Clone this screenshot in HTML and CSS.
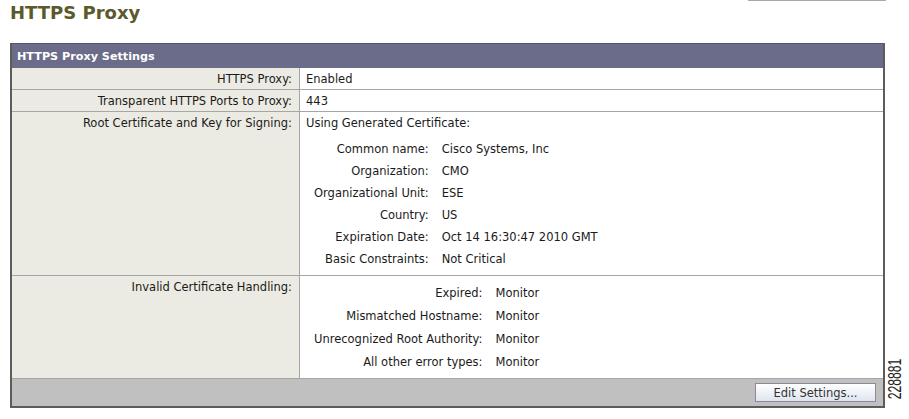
FILE: index.html
```html
<!DOCTYPE html>
<html lang="en">
<head>
    <meta charset="UTF-8">
    <meta name="viewport" content="width=device-width, initial-scale=1.0">
    <link rel="stylesheet" href="styles.css">
    <title>HTTPS Proxy</title>
</head>
<body>
    <!-- Page heading -->
    <div class="topbar">
        <h1>HTTPS Proxy</h1>
        <div class="tab-edge"></div>
    </div>

    <div class="page">
        <div class="panel">
            <div class="panel-head">HTTPS Proxy Settings</div>

            <div class="row">
                <div class="label">HTTPS Proxy:</div>
                <div class="value">Enabled</div>
            </div>

            <div class="row">
                <div class="label">Transparent HTTPS Ports to Proxy:</div>
                <div class="value">443</div>
            </div>

            <!-- Certificate details -->
            <div class="row">
                <div class="label">Root Certificate and Key for Signing:</div>
                <div class="value cert">
                    <div>Using Generated Certificate:</div>
                    <div class="details">
                        <span class="k">Common name:</span><span>Cisco Systems, Inc</span>
                        <span class="k">Organization:</span><span>CMO</span>
                        <span class="k">Organizational Unit:</span><span>ESE</span>
                        <span class="k">Country:</span><span>US</span>
                        <span class="k">Expiration Date:</span><span>Oct 14 16:30:47 2010 GMT</span>
                        <span class="k">Basic Constraints:</span><span>Not Critical</span>
                    </div>
                </div>
            </div>

            <!-- Invalid certificate handling -->
            <div class="row">
                <div class="label">Invalid Certificate Handling:</div>
                <div class="value invalid">
                    <div class="details wide">
                        <span class="k">Expired:</span><span>Monitor</span>
                        <span class="k">Mismatched Hostname:</span><span>Monitor</span>
                        <span class="k">Unrecognized Root Authority:</span><span>Monitor</span>
                        <span class="k">All other error types:</span><span>Monitor</span>
                    </div>
                </div>
            </div>

            <div class="panel-foot">
                <button>Edit Settings...</button>
            </div>
        </div>

        <div class="figno"><span>228881</span></div>
    </div>
</body>
</html>
```

FILE: styles.css
```css
body {
    font-family: "DejaVu Sans", Verdana, sans-serif;
    font-size: 11.5px;
    color: #1a1a1a;
    background-color: #fff;
    margin: 0;
    padding: 0 0 0 10px;
}

.topbar {
    display: flex;
    justify-content: space-between;
    align-items: flex-start;
    width: 876px;
    height: 43px;
}

h1 {
    margin: 2px 0 0 0;
    font-size: 18px;
    line-height: 22px;
    color: #5a5a2c;
}

.tab-edge {
    width: 138px;
    height: 0;
    border-bottom: 1px solid #a8a8a8;
}

.page {
    display: flex;
    align-items: flex-end;
}

.panel {
    width: 871px;
    border: 2px solid #5c5c5c;
    border-top: 1px solid #55556a;
}

.panel-head {
    background-color: #6b6b8a;
    color: #fff;
    font-weight: bold;
    font-size: 11.2px;
    height: 24px;
    line-height: 25px;
    padding-left: 5px;
}

.row {
    display: flex;
    border-bottom: 1px solid #a6a6a6;
    line-height: 20px;
}

.label {
    width: 280px;
    flex: none;
    text-align: right;
    padding: 1px 7px 0 0;
    background-color: #ecebe3;
    border-right: 1px solid #a6a6a6;
}

.value {
    flex: 1;
    padding: 1px 0 0 6px;
}

.cert {
    padding-bottom: 5px;
}

.invalid {
    padding-top: 6px;
    padding-bottom: 4px;
}

.details {
    display: grid;
    grid-template-columns: auto auto;
    justify-content: start;
    column-gap: 13px;
    margin-left: 8px;
    margin-top: 5px;
    line-height: 22px;
}

    .details .k {
        text-align: right;
    }

.details.wide {
    margin-top: 0;
    line-height: 23px;
}

.panel-foot {
    background-color: #c0c0c0;
    height: 27px;
    display: flex;
    justify-content: flex-end;
    align-items: center;
    padding-right: 7px;
}

button {
    font-family: "DejaVu Sans", Verdana, sans-serif;
    font-size: 11.5px;
    color: #333;
    width: 121px;
    height: 19px;
    padding: 0;
    border: 1px solid #8a8a98;
    background: linear-gradient(#ffffff, #dfe4ee);
    cursor: pointer;
}

.figno {
    width: 20px;
    height: 50px;
    display: flex;
    justify-content: center;
    align-items: center;
    margin-bottom: 4px;
}

    .figno span {
        display: inline-block;
        font-family: "Liberation Sans", Arial, sans-serif;
        font-size: 19px;
        transform: rotate(-90deg) scaleX(0.64);
        white-space: nowrap;
        color: #222;
    }
```
